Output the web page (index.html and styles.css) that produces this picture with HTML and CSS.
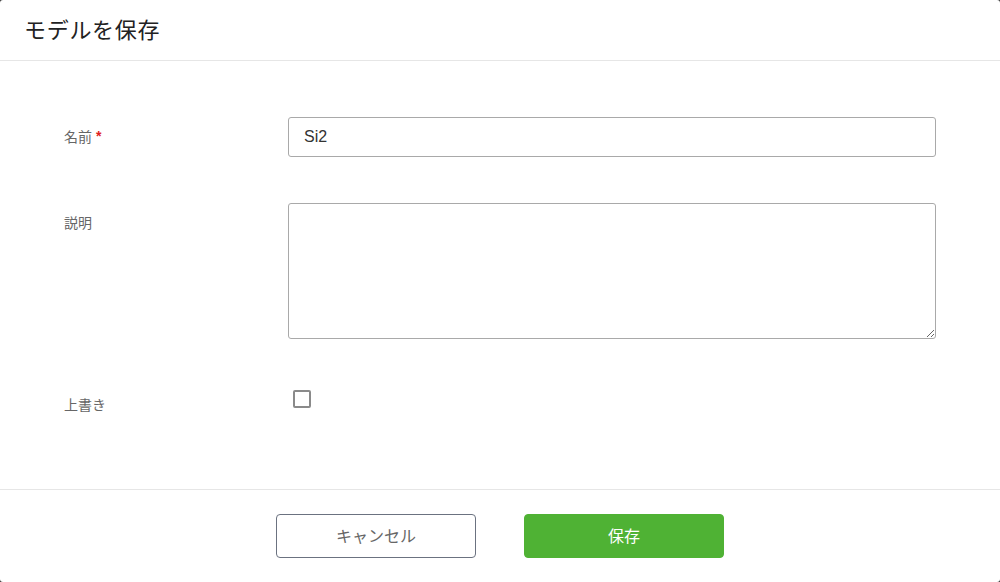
FILE: index.html
```html
<!DOCTYPE html>
<html lang="ja">
<head>
<meta charset="utf-8">
<title>モデルを保存</title>
<link rel="stylesheet" href="styles.css">
</head>
<body>
<div class="dialog">
  <div class="dialog-header">
    <h1 class="dialog-title">モデルを保存</h1>
  </div>
  <div class="dialog-body">
    <div class="form-row">
      <label class="form-label">名前<span class="required">*</span></label>
      <div class="form-control">
        <input class="text-input" type="text" value="Si2">
      </div>
    </div>
    <div class="form-row">
      <label class="form-label">説明</label>
      <div class="form-control">
        <textarea class="text-area"></textarea>
      </div>
    </div>
    <div class="form-row">
      <label class="form-label">上書き</label>
      <div class="form-control">
        <span class="checkbox"></span>
      </div>
    </div>
  </div>
  <div class="dialog-footer">
    <button class="btn btn-cancel" type="button">キャンセル</button>
    <button class="btn btn-primary" type="button">保存</button>
  </div>
</div>
</body>
</html>
```
FILE: styles.css
```css
html, body {
  margin: 0;
  padding: 0;
  height: 100%;
}
body {
  background: #3a3a3a;
  font-family: "Liberation Sans", "Noto Sans CJK JP", sans-serif;
}
.dialog {
  width: 1000px;
  height: 582px;
  background: #fff;
  border-radius: 3px;
  display: flex;
  flex-direction: column;
  overflow: hidden;
}
.dialog-header {
  height: 60px;
  border-bottom: 1px solid #e6e6e6;
  display: flex;
  align-items: center;
  padding: 0 24px;
  flex: none;
}
.dialog-title {
  margin: 0;
  font-size: 22px;
  letter-spacing: 0.7px;
  font-weight: normal;
  color: #222;
  font-family: "Noto Sans CJK JP", sans-serif;
  line-height: 1;
  padding-bottom: 4px;
}
.dialog-body {
  flex: 1;
  padding: 56px 64px 0 64px;
  display: flex;
  flex-direction: column;
  gap: 46px;
}
.form-row {
  display: flex;
  align-items: flex-start;
}
.form-label {
  width: 224px;
  height: 40px;
  flex: none;
  display: flex;
  align-items: center;
  gap: 4px;
  font-size: 14px;
  line-height: 20px;
  padding-bottom: 3px;
  box-sizing: border-box;
  color: #666;
  font-family: "Noto Sans CJK JP", sans-serif;
}
.required {
  color: #e02020;
  font-family: "Liberation Sans", sans-serif;
  font-weight: bold;
}
.form-control {
  width: 648px;
}
.text-input {
  display: block;
  box-sizing: border-box;
  width: 648px;
  height: 40px;
  border: 1px solid #a9a9a9;
  border-radius: 3px;
  padding: 0 15px;
  font-size: 16px;
  color: #333;
  font-family: "Liberation Sans", "Noto Sans CJK JP", sans-serif;
  outline: none;
  margin: 0;
}
.text-area {
  display: block;
  box-sizing: border-box;
  width: 648px;
  height: 136px;
  border: 1px solid #a9a9a9;
  border-radius: 3px;
  padding: 8px 15px;
  font-size: 16px;
  resize: vertical;
  outline: none;
  margin: 0;
}
.checkbox {
  display: block;
  box-sizing: border-box;
  width: 18px;
  height: 18px;
  margin: 5px 0 0 5px;
  border: 2px solid #8a8a8a;
  border-radius: 2px;
  background: #fff;
}
.dialog-footer {
  flex: none;
  border-top: 1px solid #e6e6e6;
  padding: 24px 0;
  display: flex;
  justify-content: center;
  gap: 48px;
}
.btn {
  width: 200px;
  height: 44px;
  box-sizing: border-box;
  border-radius: 4px;
  font-size: 16px;
  font-family: "Noto Sans CJK JP", sans-serif;
  cursor: pointer;
  padding: 0 0 2px 0;
}
.btn-cancel {
  background: #fff;
  border: 1px solid #6b7280;
  color: #666;
}
.btn-primary {
  background: #4fb234;
  border: 1px solid #4fb234;
  color: #fff;
}
```
